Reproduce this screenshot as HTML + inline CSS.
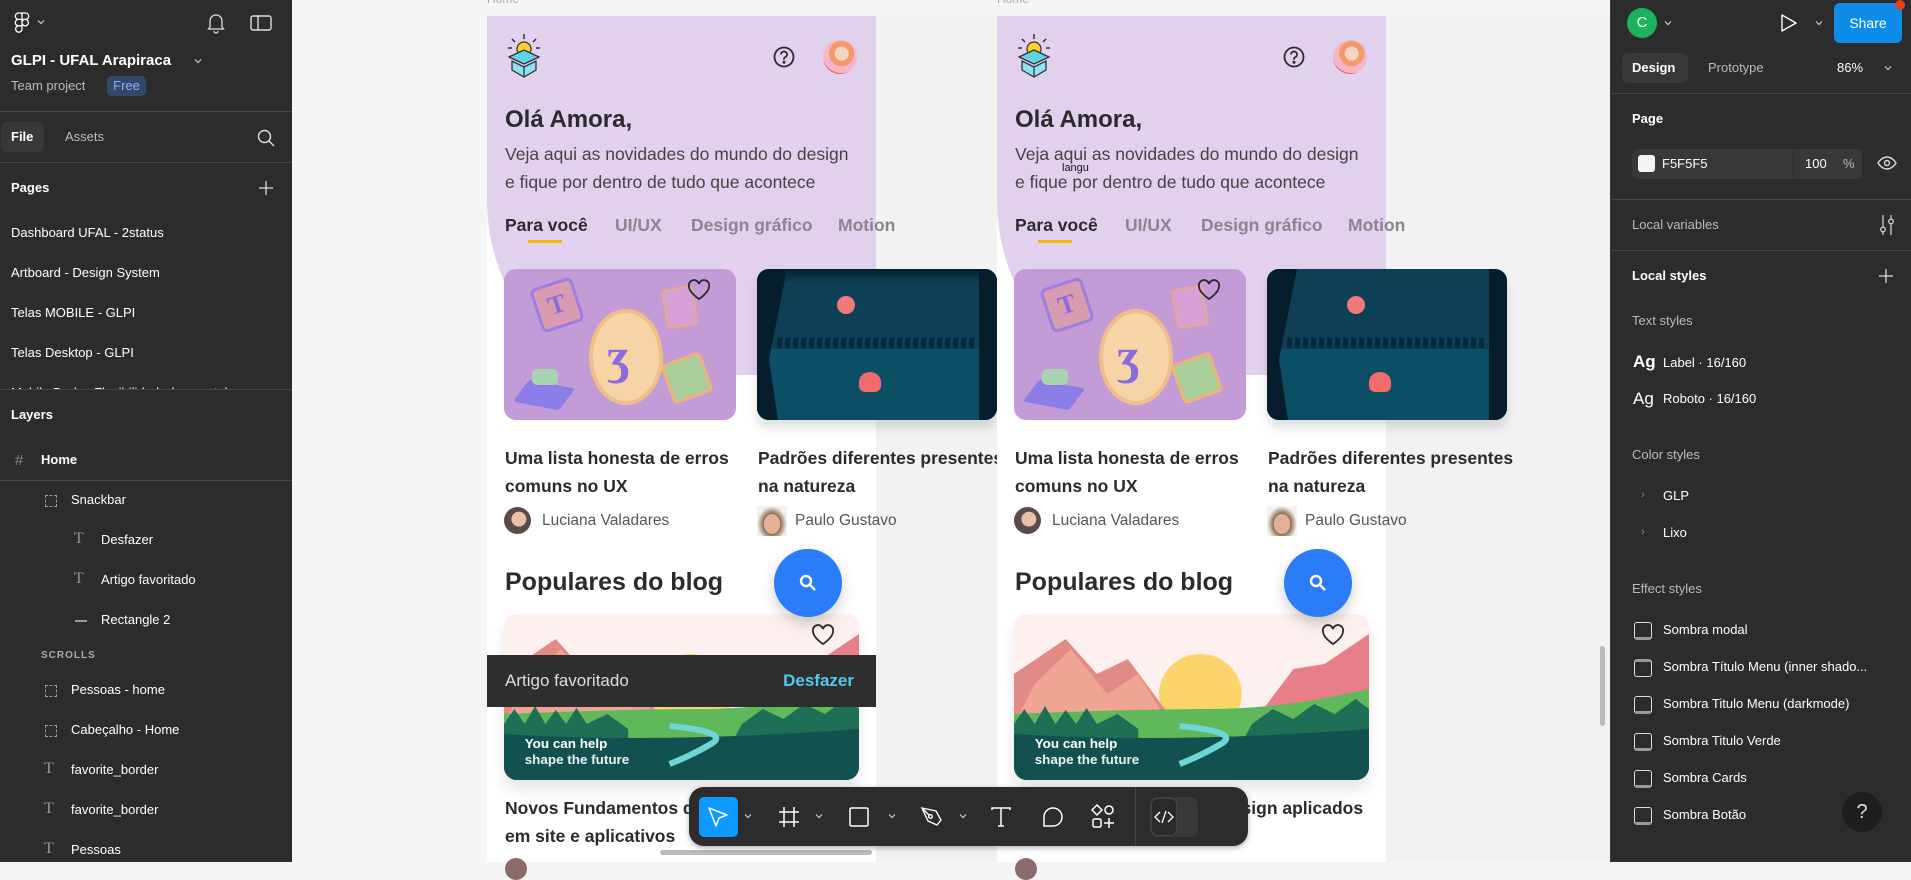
<!DOCTYPE html>
<html><head><meta charset="utf-8">
<style>
*{margin:0;padding:0;box-sizing:border-box}
body{width:1911px;height:862px;overflow:hidden;background:#f5f5f5;font-family:"Liberation Sans",sans-serif;position:relative}
.a{position:absolute;white-space:nowrap}
.lp{left:0;top:0;width:292px;height:862px;background:#2c2c2c;color:#fff;font-size:13px}
.rp{left:1610px;top:0;width:301px;height:862px;background:#2c2c2c;color:#fff;font-size:13px;border-left:1px solid #3a3a3a}
.hr{position:absolute;left:0;right:0;height:1px;background:#444}
.t{line-height:16px}
.frame{width:389px;height:846px}
.ft{color:#2b2b2b}
</style></head><body>

<!-- LEFT PANEL -->
<div class="a lp">
  <svg class="a" style="left:14px;top:12px" width="16" height="22" viewBox="0 0 16 22" fill="none" stroke="#fff" stroke-width="1.3"><path d="M8 1H4.5a3.2 3.2 0 0 0 0 6.4H8zM8 1h3.5a3.2 3.2 0 0 1 0 6.4H8zM8 7.4H4.5a3.2 3.2 0 0 0 0 6.4H8zM8 13.8H4.5A3.2 3.2 0 1 0 8 17zM8 10.6a3.2 3.2 0 1 0 6.4 0a3.2 3.2 0 1 0-6.4 0z"/></svg>
  <svg class="a" style="left:37px;top:19px" width="8" height="6" viewBox="0 0 8 6"><path d="M1 1.5l3 3 3-3" stroke="#ccc" fill="none" stroke-width="1.2"/></svg>
  <svg class="a" style="left:206px;top:12px" width="20" height="22" viewBox="0 0 20 22" fill="none" stroke="#ddd" stroke-width="1.3"><path d="M4 15V9a6 6 0 0 1 12 0v6l1.5 2h-15zM8 19a2 2 0 0 0 4 0"/></svg>
  <svg class="a" style="left:250px;top:14px" width="22" height="18" viewBox="0 0 22 18" fill="none" stroke="#ddd" stroke-width="1.4"><rect x="1" y="2" width="20" height="14" rx="2"/><path d="M8 2v14"/></svg>
  <div class="a t" style="left:11px;top:53px;font-size:15px;font-weight:bold">GLPI - UFAL Arapiraca</div>
  <svg class="a" style="left:194px;top:58px" width="8" height="6" viewBox="0 0 8 6"><path d="M1 1.5l3 3 3-3" stroke="#ccc" fill="none" stroke-width="1.2"/></svg>
  <div class="a t" style="left:11px;top:78px;color:#bbb">Team project</div>
  <div class="a" style="left:107px;top:76px;width:39px;height:20px;border-radius:5px;background:#34486a;color:#8ab6ff;font-size:13px;line-height:20px;text-align:center">Free</div>
  <div class="hr" style="top:111px"></div>
  <div class="a" style="left:1px;top:122px;width:43px;height:30px;border-radius:6px;background:#383838"></div>
  <div class="a t" style="left:11px;top:129px;font-weight:bold">File</div>
  <div class="a t" style="left:65px;top:129px;color:#bbb">Assets</div>
  <svg class="a" style="left:256px;top:128px" width="20" height="20" viewBox="0 0 20 20" fill="none" stroke="#ddd" stroke-width="1.4"><circle cx="8.5" cy="8.5" r="6"/><path d="M13 13l5 5"/></svg>
  <div class="hr" style="top:162px"></div>
  <div class="a t" style="left:11px;top:180px;font-weight:bold">Pages</div>
  <svg class="a" style="left:258px;top:180px" width="16" height="16" viewBox="0 0 16 16" stroke="#ddd" stroke-width="1.3"><path d="M8 1v14M1 8h14"/></svg>
  <div class="a t" style="left:11px;top:225px">Dashboard UFAL - 2status</div>
  <div class="a t" style="left:11px;top:265px">Artboard - Design System</div>
  <div class="a t" style="left:11px;top:305px">Telas MOBILE - GLPI</div>
  <div class="a t" style="left:11px;top:345px">Telas Desktop - GLPI</div>
  <div class="a" style="left:11px;top:386px;width:220px;height:3px;overflow:hidden"><div class="t" style="margin-top:-1px">Mobile Dados Flexibilidade (proposta)</div></div>
  <div class="hr" style="top:389px"></div>
  <div class="a t" style="left:11px;top:407px;font-weight:bold">Layers</div>
  <div class="a" style="left:15px;top:454px;color:#888;font-size:15px;line-height:14px">#</div>
  <div class="a t" style="left:41px;top:452px;font-weight:bold">Home</div>
  <div class="hr" style="top:480px"></div>
  <div class="a" style="left:45px;top:495px;width:12px;height:12px;border:1px dashed #999"></div>
  <div class="a t" style="left:71px;top:492px">Snackbar</div>
  <div class="a" style="left:74px;top:531px;color:#999;font-family:'Liberation Serif',serif;font-size:16px;line-height:16px">T</div>
  <div class="a t" style="left:101px;top:532px">Desfazer</div>
  <div class="a" style="left:74px;top:571px;color:#999;font-family:'Liberation Serif',serif;font-size:16px;line-height:16px">T</div>
  <div class="a t" style="left:101px;top:572px">Artigo favoritado</div>
  <div class="a" style="left:75px;top:620px;width:12px;height:2px;background:#999"></div>
  <div class="a t" style="left:101px;top:612px">Rectangle 2</div>
  <div class="a" style="left:41px;top:650px;color:#aaa;font-size:10px;font-weight:bold;letter-spacing:1px">SCROLLS</div>
  <div class="a" style="left:45px;top:685px;width:12px;height:12px;border:1px dashed #999"></div>
  <div class="a t" style="left:71px;top:682px">Pessoas - home</div>
  <div class="a" style="left:45px;top:725px;width:12px;height:12px;border:1px dashed #999"></div>
  <div class="a t" style="left:71px;top:722px">Cabeçalho - Home</div>
  <div class="a" style="left:44px;top:761px;color:#999;font-family:'Liberation Serif',serif;font-size:16px;line-height:16px">T</div>
  <div class="a t" style="left:71px;top:762px">favorite_border</div>
  <div class="a" style="left:44px;top:801px;color:#999;font-family:'Liberation Serif',serif;font-size:16px;line-height:16px">T</div>
  <div class="a t" style="left:71px;top:802px">favorite_border</div>
  <div class="a" style="left:44px;top:841px;color:#999;font-family:'Liberation Serif',serif;font-size:16px;line-height:16px">T</div>
  <div class="a t" style="left:71px;top:842px">Pessoas</div>
</div>

<!-- CANVAS -->
<div class="a" style="left:487px;top:-8px;color:#aaa;font-size:12px">Home</div>
<div class="a" style="left:997px;top:-8px;color:#aaa;font-size:12px">Home</div>
<div class="a" style="left:876px;top:16px;width:121px;height:846px;background:#f2f2f2"></div>
<div class="a" style="left:1386px;top:16px;width:224px;height:846px;background:#f2f2f2"></div>

<div class="a frame" style="left:487px;top:16px;background:#fff">
  <div class="a" style="left:0;top:0;width:389px;height:359px;background:#e1d1ec;border-bottom-left-radius:150px 175px"></div>
  <svg class="a" style="left:19px;top:17px" width="36" height="46" viewBox="0 0 36 46"><g stroke="#333" stroke-width="1.5" fill="none"><path d="M18 1v5M6 6l3 3M30 6l-3 3M2 15h4M34 15h-4"/></g><circle cx="18" cy="16" r="7" fill="#ffd02b" stroke="#333" stroke-width="1.2"/><path d="M3 24l15-7 15 7-15 7z" fill="#5fd3e8" stroke="#333" stroke-width="1.3"/><path d="M6 28v9l12 7 12-7v-9l-12 6z" fill="#8ee3f2" stroke="#333" stroke-width="1.3"/><path d="M18 34v10" stroke="#333" stroke-width="1.3"/></svg>
  <svg class="a" style="left:286px;top:30px" width="22" height="22" viewBox="0 0 22 22" fill="none" stroke="#2b2b2b" stroke-width="1.8"><circle cx="11" cy="11" r="9.5"/><path d="M8 8.5a3 3 0 1 1 4 2.8c-.8.4-1 1-1 2v.5"/><circle cx="11" cy="16.3" r=".6" fill="#2b2b2b"/></svg>
  <div class="a" style="left:336px;top:24px;width:34px;height:34px;border-radius:50%;background:radial-gradient(circle at 55% 40%,#f3d4c6 0 25%,#f29a6c 26% 45%,#f5b6c8 46% 70%,#e66 71%)"></div>
  <div class="a ft" style="left:18px;top:89px;font-size:24px;font-weight:bold;line-height:30px">Olá Amora,</div>
  <div class="a" style="left:18px;top:127px;font-size:17.5px;line-height:22px;color:#444">Veja aqui as novidades do mundo do design</div>
  <div class="a" style="left:18px;top:155px;font-size:17.5px;line-height:22px;color:#444">e fique por dentro de tudo que acontece</div>
  <div class="a ft" style="left:18px;top:198px;font-size:17.5px;font-weight:bold;line-height:22px">Para você</div>
  <div class="a" style="left:128px;top:198px;font-size:17.5px;font-weight:bold;line-height:22px;color:#8c8490">UI/UX</div>
  <div class="a" style="left:204px;top:198px;font-size:17.5px;font-weight:bold;line-height:22px;color:#8c8490">Design gráfico</div>
  <div class="a" style="left:351px;top:198px;font-size:17.5px;font-weight:bold;line-height:22px;color:#8c8490">Motion</div>
  <div class="a" style="left:41px;top:224px;width:34px;height:3px;background:#f5b800"></div>
  <div class="a" style="left:17px;top:253px;width:232px;height:151px;border-radius:12px;background:#c39bd7;overflow:hidden">
    <div class="a" style="left:31px;top:13px;width:44px;height:46px;border-radius:6px;background:#d99bb0;border:3px solid #9c7fe0;transform:rotate(-18deg);color:#8a6be0;font:bold 26px 'Liberation Serif',serif;text-align:center;line-height:40px">T</div>
    <div class="a" style="left:85px;top:40px;width:74px;height:96px;border-radius:50%;background:#f7d4a6;border:4px solid #f0bf88"></div>
    <div class="a" style="left:103px;top:58px;font:bold 50px 'Liberation Serif',serif;color:#8a6be0">ʒ</div>
    <div class="a" style="left:160px;top:18px;width:32px;height:40px;border-radius:4px;background:#d7a0d6;border:2px solid #e9a78c;transform:rotate(-10deg)"></div>
    <div class="a" style="left:162px;top:88px;width:42px;height:42px;border-radius:5px;background:#a7ce9b;border:3px solid #f0b278;transform:rotate(-20deg)"></div>
    <div class="a" style="left:14px;top:115px;width:52px;height:22px;background:#8c7ee8;transform:skewX(-30deg) rotate(10deg);border-radius:3px"></div>
    <div class="a" style="left:28px;top:100px;width:26px;height:16px;border-radius:5px;background:#a9d3b0"></div>
  </div>
  <svg class="a" style="left:200px;top:263px" width="24" height="22" viewBox="0 0 24 22" fill="none" stroke="#2b2b2b" stroke-width="1.8"><path d="M12 20S2 13.5 2 7.5A4.8 4.8 0 0 1 12 5a4.8 4.8 0 0 1 10 2.5C22 13.5 12 20 12 20z"/></svg>
  <div class="a" style="left:270px;top:253px;width:240px;height:151px;border-radius:12px;background:#0d3f56;overflow:hidden;box-shadow:0 8px 10px rgba(0,0,0,.12)">
    <div class="a" style="left:0;top:0;width:240px;height:14px;background:linear-gradient(#04202e,transparent)"></div>
    <div class="a" style="left:0;top:80px;width:240px;height:71px;background:#0b4e66"></div>
    <div class="a" style="left:20px;top:69px;width:200px;height:10px;background:repeating-linear-gradient(90deg,#06283a 0 5px,transparent 5px 8px)"></div>
    <div class="a" style="left:80px;top:27px;width:18px;height:18px;border-radius:50%;background:#f07a78"></div>
    <div class="a" style="left:0;top:0;width:30px;height:151px;background:#061e2b;clip-path:polygon(0 0,100% 0,40% 60%,70% 100%,0 100%)"></div>
    <div class="a" style="left:222px;top:0;width:18px;height:151px;background:#061e2b"></div>
    <div class="a" style="left:102px;top:103px;width:22px;height:20px;border-radius:50% 50% 30% 30%;background:#f26c6c"></div>
  </div>
  <div class="a ft" style="left:18px;top:431px;font-size:17.5px;font-weight:bold;line-height:22px">Uma lista honesta de erros</div>
  <div class="a ft" style="left:18px;top:459px;font-size:17.5px;font-weight:bold;line-height:22px">comuns no UX</div>
  <div class="a ft" style="left:271px;top:431px;font-size:17.5px;font-weight:bold;line-height:22px">Padrões diferentes presentes</div>
  <div class="a ft" style="left:271px;top:459px;font-size:17.5px;font-weight:bold;line-height:22px">na natureza</div>
  <div class="a" style="left:17px;top:491px;width:27px;height:27px;border-radius:50%;background:radial-gradient(circle at 55% 45%,#e8c0a8 0 35%,#5b4a48 36%)"></div>
  <div class="a" style="left:55px;top:495px;font-size:15.5px;color:#555;line-height:19px">Luciana Valadares</div>
  <div class="a" style="left:270px;top:490px;width:30px;height:30px;background:radial-gradient(ellipse at 50% 60%,#e3b096 0 38%,#8a6a4a 40%,#f2f2f2 70%)"></div>
  <div class="a" style="left:308px;top:495px;font-size:15.5px;color:#555;line-height:19px">Paulo Gustavo</div>
  <div class="a ft" style="left:18px;top:551px;font-size:25px;font-weight:bold;line-height:30px">Populares do blog</div>
  <div class="a" style="left:17px;top:598px;width:355px;height:166px;border-radius:13px;overflow:hidden;box-shadow:0 10px 14px rgba(0,0,0,.1)">
    <svg width="355" height="166" viewBox="0 0 343 166" preserveAspectRatio="none">
      <rect width="343" height="166" fill="#fdf0ee"/>
      <circle cx="180" cy="80" r="40" fill="#fbd56b"/>
      <path d="M0 60L50 25 80 60 110 45 160 115 0 115z" fill="#e28a86"/>
      <path d="M20 70L55 35 90 80 120 60 150 110H0z" fill="#f0a592"/>
      <path d="M230 110L270 55 300 50 343 20V110z" fill="#e67f88"/>
      <path d="M0 100Q120 95 190 95T343 75V166H0z" fill="#5fb95a"/>
      <path d="M0 110L10 95 20 110 30 92 40 110 50 96 60 110 70 94 80 110 100 100 120 115V166H0z" fill="#1f6e56"/>
      <path d="M230 110L250 95 270 105 290 90 310 100 330 85 343 95V166H200z" fill="#1f6e56"/>
      <path d="M0 120Q150 130 343 115V166H0z" fill="#12514f"/>
      <path d="M160 112Q220 118 200 130T160 150" stroke="#6fd6d6" stroke-width="6" fill="none"/>
      <text x="20" y="134" font-family="Liberation Sans" font-weight="bold" font-size="13" fill="#fff">You can help</text>
      <text x="20" y="150" font-family="Liberation Sans" font-weight="bold" font-size="13" fill="#e8f4f0">shape the future</text>
    </svg>
  </div>
  <svg class="a" style="left:324px;top:608px" width="24" height="22" viewBox="0 0 24 22" fill="none" stroke="#2b2b2b" stroke-width="1.8"><path d="M12 20S2 13.5 2 7.5A4.8 4.8 0 0 1 12 5a4.8 4.8 0 0 1 10 2.5C22 13.5 12 20 12 20z"/></svg>
  <div class="a" style="left:287px;top:533px;width:68px;height:68px;border-radius:50%;background:#2a7cf7;box-shadow:0 6px 14px rgba(0,0,0,.2)"></div>
  <svg class="a" style="left:311px;top:557px" width="20" height="20" viewBox="0 0 20 20" fill="none" stroke="#fff" stroke-width="2.4"><circle cx="8" cy="8" r="5"/><path d="M12 12l5 5"/></svg>
  <div class="a ft" style="left:18px;top:781px;font-size:17.5px;font-weight:bold;line-height:22px">Novos Fundamentos do Design aplicados</div>
  <div class="a ft" style="left:18px;top:809px;font-size:17.5px;font-weight:bold;line-height:22px">em site e aplicativos</div>
  <div class="a" style="left:0;top:639px;width:389px;height:52px;background:#2e2e2e">
    <div class="a" style="left:18px;top:15px;color:#ddd;font-size:17px;line-height:22px">Artigo favoritado</div>
    <div class="a" style="right:22px;top:15px;color:#4fcbe9;font-size:17px;font-weight:bold;line-height:22px">Desfazer</div>
  </div>
</div>

<div class="a frame" style="left:997px;top:16px;background:#fff">
  <div class="a" style="left:0;top:0;width:389px;height:359px;background:#e1d1ec;border-bottom-left-radius:150px 175px"></div>
  <svg class="a" style="left:19px;top:17px" width="36" height="46" viewBox="0 0 36 46"><g stroke="#333" stroke-width="1.5" fill="none"><path d="M18 1v5M6 6l3 3M30 6l-3 3M2 15h4M34 15h-4"/></g><circle cx="18" cy="16" r="7" fill="#ffd02b" stroke="#333" stroke-width="1.2"/><path d="M3 24l15-7 15 7-15 7z" fill="#5fd3e8" stroke="#333" stroke-width="1.3"/><path d="M6 28v9l12 7 12-7v-9l-12 6z" fill="#8ee3f2" stroke="#333" stroke-width="1.3"/><path d="M18 34v10" stroke="#333" stroke-width="1.3"/></svg>
  <svg class="a" style="left:286px;top:30px" width="22" height="22" viewBox="0 0 22 22" fill="none" stroke="#2b2b2b" stroke-width="1.8"><circle cx="11" cy="11" r="9.5"/><path d="M8 8.5a3 3 0 1 1 4 2.8c-.8.4-1 1-1 2v.5"/><circle cx="11" cy="16.3" r=".6" fill="#2b2b2b"/></svg>
  <div class="a" style="left:336px;top:24px;width:34px;height:34px;border-radius:50%;background:radial-gradient(circle at 55% 40%,#f3d4c6 0 25%,#f29a6c 26% 45%,#f5b6c8 46% 70%,#e66 71%)"></div>
  <div class="a ft" style="left:18px;top:89px;font-size:24px;font-weight:bold;line-height:30px">Olá Amora,</div>
  <div class="a" style="left:18px;top:127px;font-size:17.5px;line-height:22px;color:#444">Veja aqui as novidades do mundo do design</div>
  <div class="a" style="left:18px;top:155px;font-size:17.5px;line-height:22px;color:#444">e fique por dentro de tudo que acontece</div>
  <div class="a" style="left:65px;top:146px;font-size:11px;color:#111">langu</div>
  <div class="a ft" style="left:18px;top:198px;font-size:17.5px;font-weight:bold;line-height:22px">Para você</div>
  <div class="a" style="left:128px;top:198px;font-size:17.5px;font-weight:bold;line-height:22px;color:#8c8490">UI/UX</div>
  <div class="a" style="left:204px;top:198px;font-size:17.5px;font-weight:bold;line-height:22px;color:#8c8490">Design gráfico</div>
  <div class="a" style="left:351px;top:198px;font-size:17.5px;font-weight:bold;line-height:22px;color:#8c8490">Motion</div>
  <div class="a" style="left:41px;top:224px;width:34px;height:3px;background:#f5b800"></div>
  <div class="a" style="left:17px;top:253px;width:232px;height:151px;border-radius:12px;background:#c39bd7;overflow:hidden">
    <div class="a" style="left:31px;top:13px;width:44px;height:46px;border-radius:6px;background:#d99bb0;border:3px solid #9c7fe0;transform:rotate(-18deg);color:#8a6be0;font:bold 26px 'Liberation Serif',serif;text-align:center;line-height:40px">T</div>
    <div class="a" style="left:85px;top:40px;width:74px;height:96px;border-radius:50%;background:#f7d4a6;border:4px solid #f0bf88"></div>
    <div class="a" style="left:103px;top:58px;font:bold 50px 'Liberation Serif',serif;color:#8a6be0">ʒ</div>
    <div class="a" style="left:160px;top:18px;width:32px;height:40px;border-radius:4px;background:#d7a0d6;border:2px solid #e9a78c;transform:rotate(-10deg)"></div>
    <div class="a" style="left:162px;top:88px;width:42px;height:42px;border-radius:5px;background:#a7ce9b;border:3px solid #f0b278;transform:rotate(-20deg)"></div>
    <div class="a" style="left:14px;top:115px;width:52px;height:22px;background:#8c7ee8;transform:skewX(-30deg) rotate(10deg);border-radius:3px"></div>
    <div class="a" style="left:28px;top:100px;width:26px;height:16px;border-radius:5px;background:#a9d3b0"></div>
  </div>
  <svg class="a" style="left:200px;top:263px" width="24" height="22" viewBox="0 0 24 22" fill="none" stroke="#2b2b2b" stroke-width="1.8"><path d="M12 20S2 13.5 2 7.5A4.8 4.8 0 0 1 12 5a4.8 4.8 0 0 1 10 2.5C22 13.5 12 20 12 20z"/></svg>
  <div class="a" style="left:270px;top:253px;width:240px;height:151px;border-radius:12px;background:#0d3f56;overflow:hidden;box-shadow:0 8px 10px rgba(0,0,0,.12)">
    <div class="a" style="left:0;top:80px;width:240px;height:71px;background:#0b4e66"></div>
    <div class="a" style="left:20px;top:69px;width:200px;height:10px;background:repeating-linear-gradient(90deg,#06283a 0 5px,transparent 5px 8px)"></div>
    <div class="a" style="left:80px;top:27px;width:18px;height:18px;border-radius:50%;background:#f07a78"></div>
    <div class="a" style="left:0;top:0;width:30px;height:151px;background:#061e2b;clip-path:polygon(0 0,100% 0,40% 60%,70% 100%,0 100%)"></div>
    <div class="a" style="left:222px;top:0;width:18px;height:151px;background:#061e2b"></div>
    <div class="a" style="left:102px;top:103px;width:22px;height:20px;border-radius:50% 50% 30% 30%;background:#f26c6c"></div>
  </div>
  <div class="a ft" style="left:18px;top:431px;font-size:17.5px;font-weight:bold;line-height:22px">Uma lista honesta de erros</div>
  <div class="a ft" style="left:18px;top:459px;font-size:17.5px;font-weight:bold;line-height:22px">comuns no UX</div>
  <div class="a ft" style="left:271px;top:431px;font-size:17.5px;font-weight:bold;line-height:22px">Padrões diferentes presentes</div>
  <div class="a ft" style="left:271px;top:459px;font-size:17.5px;font-weight:bold;line-height:22px">na natureza</div>
  <div class="a" style="left:17px;top:491px;width:27px;height:27px;border-radius:50%;background:radial-gradient(circle at 55% 45%,#e8c0a8 0 35%,#5b4a48 36%)"></div>
  <div class="a" style="left:55px;top:495px;font-size:15.5px;color:#555;line-height:19px">Luciana Valadares</div>
  <div class="a" style="left:270px;top:490px;width:30px;height:30px;background:radial-gradient(ellipse at 50% 60%,#e3b096 0 38%,#8a6a4a 40%,#f2f2f2 70%)"></div>
  <div class="a" style="left:308px;top:495px;font-size:15.5px;color:#555;line-height:19px">Paulo Gustavo</div>
  <div class="a ft" style="left:18px;top:551px;font-size:25px;font-weight:bold;line-height:30px">Populares do blog</div>
  <div class="a" style="left:17px;top:598px;width:355px;height:166px;border-radius:13px;overflow:hidden;box-shadow:0 10px 14px rgba(0,0,0,.1)">
    <svg width="355" height="166" viewBox="0 0 343 166" preserveAspectRatio="none">
      <rect width="343" height="166" fill="#fdf0ee"/>
      <circle cx="180" cy="80" r="40" fill="#fbd56b"/>
      <path d="M0 60L50 25 80 60 110 45 160 115 0 115z" fill="#e28a86"/>
      <path d="M20 70L55 35 90 80 120 60 150 110H0z" fill="#f0a592"/>
      <path d="M230 110L270 55 300 50 343 20V110z" fill="#e67f88"/>
      <path d="M0 100Q120 95 190 95T343 75V166H0z" fill="#5fb95a"/>
      <path d="M0 110L10 95 20 110 30 92 40 110 50 96 60 110 70 94 80 110 100 100 120 115V166H0z" fill="#1f6e56"/>
      <path d="M230 110L250 95 270 105 290 90 310 100 330 85 343 95V166H200z" fill="#1f6e56"/>
      <path d="M0 120Q150 130 343 115V166H0z" fill="#12514f"/>
      <path d="M160 112Q220 118 200 130T160 150" stroke="#6fd6d6" stroke-width="6" fill="none"/>
      <text x="20" y="134" font-family="Liberation Sans" font-weight="bold" font-size="13" fill="#fff">You can help</text>
      <text x="20" y="150" font-family="Liberation Sans" font-weight="bold" font-size="13" fill="#e8f4f0">shape the future</text>
    </svg>
  </div>
  <svg class="a" style="left:324px;top:608px" width="24" height="22" viewBox="0 0 24 22" fill="none" stroke="#2b2b2b" stroke-width="1.8"><path d="M12 20S2 13.5 2 7.5A4.8 4.8 0 0 1 12 5a4.8 4.8 0 0 1 10 2.5C22 13.5 12 20 12 20z"/></svg>
  <div class="a" style="left:287px;top:533px;width:68px;height:68px;border-radius:50%;background:#2a7cf7;box-shadow:0 6px 14px rgba(0,0,0,.2)"></div>
  <svg class="a" style="left:311px;top:557px" width="20" height="20" viewBox="0 0 20 20" fill="none" stroke="#fff" stroke-width="2.4"><circle cx="8" cy="8" r="5"/><path d="M12 12l5 5"/></svg>
  <div class="a ft" style="left:18px;top:781px;font-size:17.5px;font-weight:bold;line-height:22px">Novos Fundamentos do Design aplicados</div>
  <div class="a ft" style="left:18px;top:809px;font-size:17.5px;font-weight:bold;line-height:22px">em site e aplicativos</div>
  <div class="a" style="left:18px;top:842px;width:22px;height:22px;border-radius:50%;background:#8a6a6a"></div>
</div>
<div class="a" style="left:505px;top:858px;width:22px;height:22px;border-radius:50%;background:#8a6a6a"></div>

<div class="a" style="left:1600px;top:646px;width:5px;height:80px;border-radius:3px;background:#bbb"></div>
<div class="a" style="left:660px;top:850px;width:212px;height:5px;border-radius:3px;background:#bbb"></div>

<!-- TOOLBAR -->
<div class="a" style="left:689px;top:787px;width:559px;height:59px;border-radius:15px;background:#2c2c2c;box-shadow:0 2px 6px rgba(0,0,0,.3)">
  <div class="a" style="left:10px;top:10px;width:39px;height:40px;border-radius:5px;background:#0d99ff"></div>
  <svg class="a" style="left:18px;top:19px" width="22" height="22" viewBox="0 0 22 22" fill="none" stroke="#fff" stroke-width="1.5" stroke-linejoin="round"><path d="M2 2l18 7-8 3-3 8z"/></svg>
  <svg class="a" style="left:55px;top:26px" width="8" height="6" viewBox="0 0 8 6"><path d="M1 1.5l3 3 3-3" stroke="#ccc" fill="none" stroke-width="1.2"/></svg>
  <svg class="a" style="left:89px;top:19px" width="22" height="22" viewBox="0 0 22 22" stroke="#fff" stroke-width="1.5"><path d="M6 1v20M16 1v20M1 6h20M1 16h20"/></svg>
  <svg class="a" style="left:126px;top:26px" width="8" height="6" viewBox="0 0 8 6"><path d="M1 1.5l3 3 3-3" stroke="#ccc" fill="none" stroke-width="1.2"/></svg>
  <svg class="a" style="left:159px;top:19px" width="22" height="22" viewBox="0 0 22 22" fill="none" stroke="#fff" stroke-width="1.5"><rect x="2" y="2" width="18" height="18" rx="1.5"/></svg>
  <svg class="a" style="left:199px;top:26px" width="8" height="6" viewBox="0 0 8 6"><path d="M1 1.5l3 3 3-3" stroke="#ccc" fill="none" stroke-width="1.2"/></svg>
  <svg class="a" style="left:231px;top:18px" width="24" height="24" viewBox="0 0 24 24" fill="none" stroke="#fff" stroke-width="1.4"><path d="M2 3l14 3 5 9-4 5-9-4zM2 3l7 7"/><circle cx="10.5" cy="11.5" r="1.8"/></svg>
  <svg class="a" style="left:270px;top:26px" width="8" height="6" viewBox="0 0 8 6"><path d="M1 1.5l3 3 3-3" stroke="#ccc" fill="none" stroke-width="1.2"/></svg>
  <svg class="a" style="left:301px;top:19px" width="22" height="22" viewBox="0 0 22 22" fill="none" stroke="#fff" stroke-width="1.5"><path d="M2 4V2h18v2M11 2v18M8 20h6"/></svg>
  <svg class="a" style="left:353px;top:19px" width="22" height="22" viewBox="0 0 22 22" fill="none" stroke="#fff" stroke-width="1.5"><path d="M2 20V11a9 9 0 1 1 9 9z"/></svg>
  <svg class="a" style="left:402px;top:17px" width="24" height="26" viewBox="0 0 24 26" fill="none" stroke="#fff" stroke-width="1.5"><path d="M6 1l5 5-5 5-5-5z"/><circle cx="18" cy="6" r="4"/><rect x="2" y="15" width="8" height="8" rx="1.5"/><path d="M18 14v10M13 19h10"/></svg>
  <div class="a" style="left:446px;top:0;width:1px;height:59px;background:#444"></div>
  <div class="a" style="left:461px;top:10px;width:48px;height:40px;border-radius:8px;background:#383838"></div>
  <div class="a" style="left:462px;top:11px;width:26px;height:38px;border-radius:7px;background:#2a2a2a;border:1px solid #444"></div>
  <svg class="a" style="left:465px;top:22px" width="20" height="16" viewBox="0 0 20 16" fill="none" stroke="#fff" stroke-width="1.3"><path d="M6 3L1 8l5 5M14 3l5 5-5 5M12 2L8 14"/></svg>
</div>

<!-- RIGHT PANEL -->
<div class="a rp">
  <div class="a" style="left:16px;top:8px;width:30px;height:30px;border-radius:50%;background:#1bb35b;color:#fff;font-size:15px;line-height:30px;text-align:center">C</div>
  <svg class="a" style="left:53px;top:20px" width="8" height="6" viewBox="0 0 8 6"><path d="M1 1.5l3 3 3-3" stroke="#ccc" fill="none" stroke-width="1.2"/></svg>
  <svg class="a" style="left:169px;top:13px" width="18" height="20" viewBox="0 0 18 20" fill="none" stroke="#fff" stroke-width="1.4" stroke-linejoin="round"><path d="M2 2l14 8-14 8z"/></svg>
  <svg class="a" style="left:204px;top:20px" width="8" height="6" viewBox="0 0 8 6"><path d="M1 1.5l3 3 3-3" stroke="#ccc" fill="none" stroke-width="1.2"/></svg>
  <div class="a" style="left:223px;top:3px;width:68px;height:40px;border-radius:6px;background:#0d8ce9;color:#fff;font-size:14px;line-height:40px;text-align:center">Share</div>
  <div class="a" style="left:284px;top:0;width:10px;height:10px;border-radius:50%;background:#e5401f"></div>
  <div class="a" style="left:11px;top:53px;width:66px;height:30px;border-radius:6px;background:#383838"></div>
  <div class="a t" style="left:21px;top:60px;font-weight:bold">Design</div>
  <div class="a t" style="left:97px;top:60px;color:#bbb">Prototype</div>
  <div class="a t" style="left:226px;top:60px">86%</div>
  <svg class="a" style="left:273px;top:65px" width="8" height="6" viewBox="0 0 8 6"><path d="M1 1.5l3 3 3-3" stroke="#ccc" fill="none" stroke-width="1.2"/></svg>
  <div class="hr" style="top:93px"></div>
  <div class="a t" style="left:21px;top:111px;font-weight:bold">Page</div>
  <div class="a" style="left:21px;top:149px;width:230px;height:30px;border-radius:5px;background:#383838"></div>
  <div class="a" style="left:27px;top:155px;width:17px;height:17px;border-radius:3px;background:#f5f5f5"></div>
  <div class="a t" style="left:51px;top:156px">F5F5F5</div>
  <div class="a" style="left:182px;top:149px;width:1px;height:30px;background:#2c2c2c"></div>
  <div class="a t" style="left:194px;top:156px">100</div>
  <div class="a t" style="left:232px;top:156px;color:#bbb">%</div>
  <svg class="a" style="left:266px;top:155px" width="20" height="16" viewBox="0 0 20 16" fill="none" stroke="#ddd" stroke-width="1.4"><path d="M1 8s3.5-6 9-6 9 6 9 6-3.5 6-9 6-9-6-9-6z"/><circle cx="10" cy="8" r="2.5"/></svg>
  <div class="hr" style="top:199px"></div>
  <div class="a t" style="left:21px;top:217px;color:#bbb">Local variables</div>
  <svg class="a" style="left:267px;top:214px" width="18" height="22" viewBox="0 0 18 22" fill="none" stroke="#ccc" stroke-width="1.3"><path d="M5 1v12M13 1v4M13 10v11M5 18v3"/><circle cx="5" cy="15.5" r="2.3"/><circle cx="13" cy="7.5" r="2.3"/></svg>
  <div class="hr" style="top:250px"></div>
  <div class="a t" style="left:21px;top:268px;font-weight:bold">Local styles</div>
  <svg class="a" style="left:267px;top:268px" width="16" height="16" viewBox="0 0 16 16" stroke="#ddd" stroke-width="1.3"><path d="M8 1v14M1 8h14"/></svg>
  <div class="a t" style="left:21px;top:313px;color:#bbb">Text styles</div>
  <div class="a" style="left:22px;top:352px;font-size:17px;font-weight:bold;line-height:20px">Ag</div>
  <div class="a t" style="left:52px;top:355px">Label · 16/160</div>
  <div class="a" style="left:22px;top:389px;font-size:17px;line-height:20px">Ag</div>
  <div class="a t" style="left:52px;top:391px">Roboto · 16/160</div>
  <div class="a t" style="left:21px;top:447px;color:#bbb">Color styles</div>
  <div class="a" style="left:30px;top:489px;color:#888;font-size:11px">›</div>
  <div class="a t" style="left:52px;top:488px">GLP</div>
  <div class="a" style="left:30px;top:526px;color:#888;font-size:11px">›</div>
  <div class="a t" style="left:52px;top:525px">Lixo</div>
  <div class="a t" style="left:21px;top:581px;color:#bbb">Effect styles</div>
  <div class="a" style="left:23px;top:622px;width:18px;height:18px;border:1.5px solid #ddd;border-radius:3px;border-bottom:3px solid #999"></div>
  <div class="a t" style="left:52px;top:622px">Sombra modal</div>
  <div class="a" style="left:23px;top:659px;width:18px;height:18px;border:1.5px solid #ddd;border-radius:3px;border-top:3px solid #999"></div>
  <div class="a t" style="left:52px;top:659px">Sombra Título Menu (inner shado...</div>
  <div class="a" style="left:23px;top:696px;width:18px;height:18px;border:1.5px solid #ddd;border-radius:3px;border-bottom:3px solid #999"></div>
  <div class="a t" style="left:52px;top:696px">Sombra Titulo Menu (darkmode)</div>
  <div class="a" style="left:23px;top:733px;width:18px;height:18px;border:1.5px solid #ddd;border-radius:3px;border-bottom:3px solid #999"></div>
  <div class="a t" style="left:52px;top:733px">Sombra Titulo Verde</div>
  <div class="a" style="left:23px;top:770px;width:18px;height:18px;border:1.5px solid #ddd;border-radius:3px;border-bottom:3px solid #999"></div>
  <div class="a t" style="left:52px;top:770px">Sombra Cards</div>
  <div class="a" style="left:23px;top:807px;width:18px;height:18px;border:1.5px solid #ddd;border-radius:3px;border-bottom:3px solid #999"></div>
  <div class="a t" style="left:52px;top:807px">Sombra Botão</div>
  <div class="a" style="left:231px;top:792px;width:40px;height:40px;border-radius:50%;background:#1e1e1e;color:#ddd;font-size:20px;line-height:40px;text-align:center">?</div>
</div>
</body></html>
